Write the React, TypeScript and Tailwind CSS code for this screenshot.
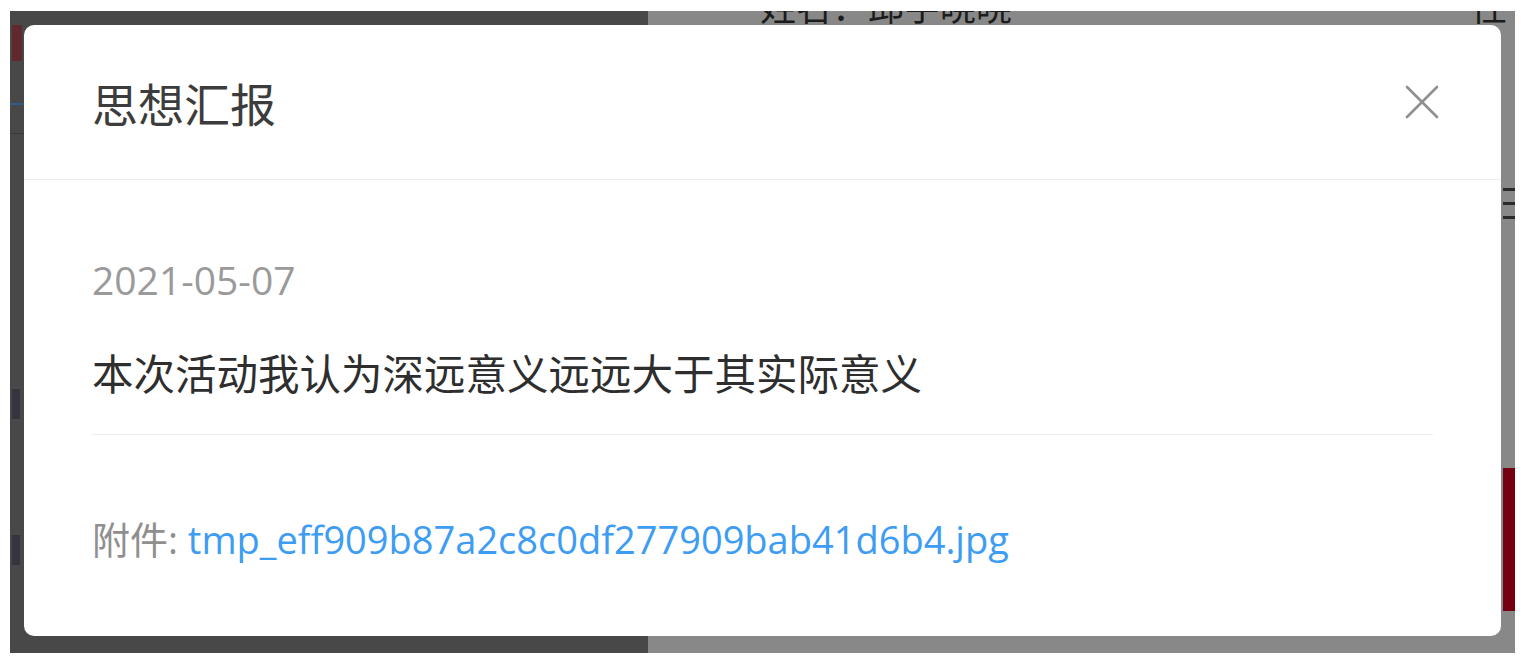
import { useState } from "react";

const SANS = "font-['Open_Sans','Noto_Sans_CJK_SC',sans-serif]";

function CloseIcon() {
  return (
    <svg width="34" height="34" viewBox="0 0 34 34" fill="none">
      <path d="M2 2L32 32M32 2L2 32" stroke="#8f8f8f" strokeWidth="2.6" strokeLinecap="round" />
    </svg>
  );
}

// Page behind the dialog, dimmed by the mask
function Backdrop() {
  return (
    <div className="absolute inset-0 flex overflow-hidden">
      <div className="relative w-[638px] bg-[#484848]">
        <span className="absolute left-[2px] top-[14px] h-[36px] w-[10px] bg-[#6a1d24] opacity-70" />
        <span className="absolute left-0 top-[92px] h-[2px] w-[14px] bg-[#2f5d8a]" />
        <span className="absolute left-0 top-[122px] h-[1px] w-[14px] bg-[#3a3a3a]" />
        <span className="absolute left-[2px] top-[378px] h-[30px] w-[8px] bg-[#2a2a3a] opacity-60" />
        <span className="absolute left-[2px] top-[524px] h-[30px] w-[8px] bg-[#2a2a3a] opacity-60" />
      </div>
      <div className="relative flex-1 bg-[#888888]">
        <span className="absolute left-[112px] top-[-26px] whitespace-nowrap font-['Noto_Sans_CJK_SC',sans-serif] text-[36px] leading-[40px] text-[#1c1c1c]">
          姓名：邱宇晓晓
        </span>
        <span className="absolute right-[8px] top-[-26px] whitespace-nowrap font-['Noto_Sans_CJK_SC',sans-serif] text-[36px] leading-[40px] text-[#1c1c1c]">
          性
        </span>
        <div className="absolute right-0 top-[177px] flex w-[12px] flex-col gap-[11px]">
          <span className="h-[3px] bg-[#2a2a2a]" />
          <span className="h-[3px] bg-[#2a2a2a]" />
          <span className="h-[3px] bg-[#2a2a2a]" />
        </div>
        <span className="absolute right-0 top-[457px] h-[143px] w-[12px] bg-[#75000f]" />
      </div>
    </div>
  );
}

export default function App() {
  const [open, setOpen] = useState(true);

  return (
    <div className="h-[667px] w-[1526px] bg-white pl-[10px] pt-[11px]">
      <div className="relative h-[642px] w-[1505px] px-[14px] pt-[14px] pb-[17px]">
        <Backdrop />
        {open && (
          <div className="relative z-10 flex h-full w-full flex-col rounded-[10px] bg-white">
            {/* Header */}
            <div className="flex h-[155px] items-center justify-between border-b border-[#ececec] pl-[68px] pr-[62px]">
              <h2 className="font-['Noto_Sans_CJK_SC',sans-serif] text-[46px] leading-[56px] font-normal text-[#3c3c3c]">
                思想汇报
              </h2>
              <button onClick={() => setOpen(false)} className="flex items-center justify-center">
                <CloseIcon />
              </button>
            </div>

            {/* Body */}
            <div className="flex flex-col px-[68px] pt-[71px]">
              <div className={`${SANS} h-[57px] text-[39px] leading-[57px] text-[#9a9a9a]`}>2021-05-07</div>
              <p className="mt-[36px] h-[57px] font-['Noto_Sans_CJK_SC',serif] text-[41.5px] leading-[57px] text-[#2e2e2e]">
                本次活动我认为深远意义远远大于其实际意义
              </p>
              <div className="mt-[33px] h-px bg-[#ececec]" />
              <div className={`${SANS} mt-[76px] h-[57px] text-[38px] leading-[57px] text-[#8f8f8f]`}>
                附件:{" "}
                <a className="text-[#3d9cf3]">tmp_eff909b87a2c8c0df277909bab41d6b4.jpg</a>
              </div>
            </div>
          </div>
        )}
      </div>
    </div>
  );
}
